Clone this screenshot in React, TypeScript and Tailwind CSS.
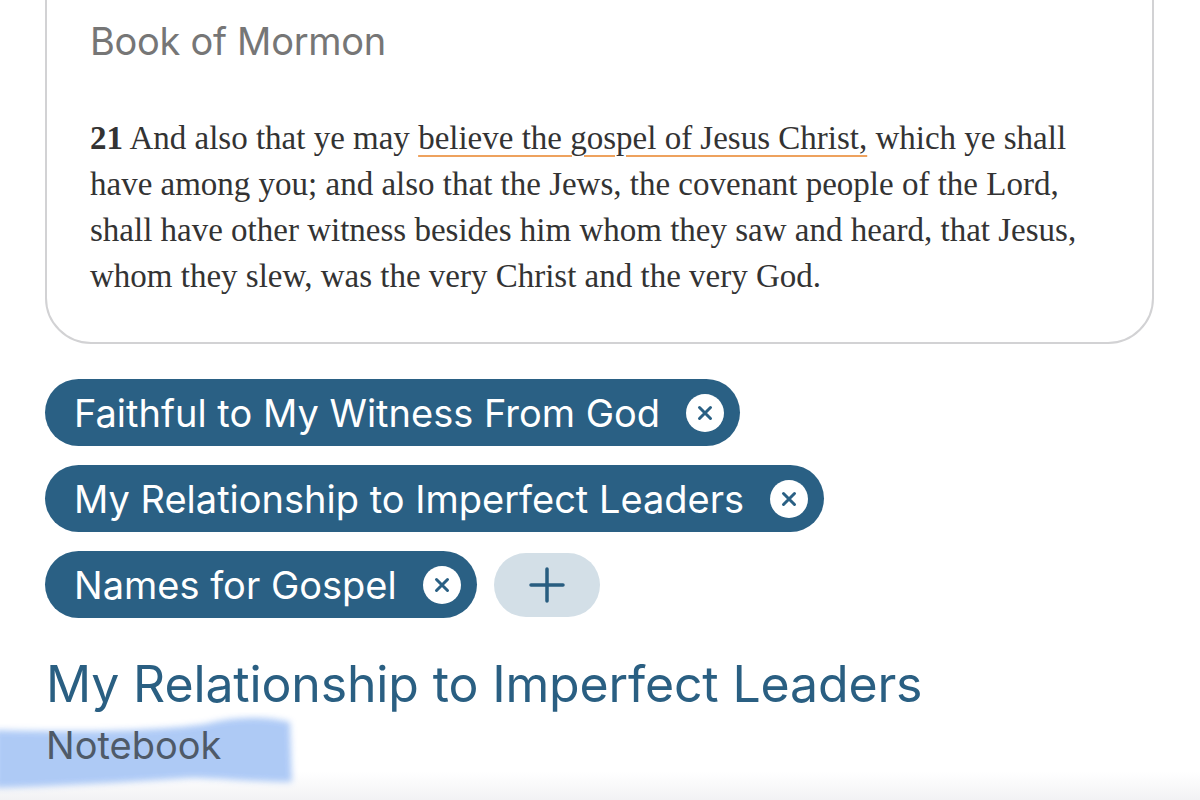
import React from "react";

const sans = { fontFamily: "Inter, 'Liberation Sans', sans-serif" };
const serif = { fontFamily: "'Liberation Serif', 'DejaVu Serif', serif" };

function CloseDot() {
  return (
    <span className="flex h-[38px] w-[38px] shrink-0 items-center justify-center rounded-full bg-white">
      <svg width="16" height="16" viewBox="0 0 16 16">
        <path d="M2.5 2.5 L13.5 13.5 M13.5 2.5 L2.5 13.5" stroke="#2a6084" strokeWidth="3" strokeLinecap="round" />
      </svg>
    </span>
  );
}

function Chip({ label }: { label: string }) {
  return (
    <div className="flex h-[67px] items-center rounded-full bg-[#2a6084] pl-[29px] pr-[16px]">
      <span className="text-[38px] leading-none text-white" style={sans}>
        {label}
      </span>
      <span className="ml-[26px]">
        <CloseDot />
      </span>
    </div>
  );
}

export default function App() {
  return (
    <div className="relative h-[800px] w-[1200px] overflow-hidden bg-white">
      <div className="pointer-events-none absolute bottom-0 left-0 h-[28px] w-full bg-gradient-to-b from-white to-[#f2f2f4]" />

      <div className="relative ml-[45px] mr-[46px] -mt-[60px] rounded-[46px] border-2 border-[#d2d2d4] bg-white pl-[43px] pr-[30px] pt-[76px] pb-[43px]">
        <div className="text-[38px] leading-[46px] tracking-[-0.3px] text-[#767676]" style={sans}>
          Book of Mormon
        </div>
        <p className="mt-[51px] text-[33px] leading-[46px] text-[#333]" style={serif}>
          <span className="font-bold">21</span> And also that ye may{" "}
          <span className="underline decoration-[#eea25e] decoration-2 underline-offset-[6px]">
            believe the gospel of Jesus Christ,
          </span>{" "}
          which ye shall
          <br />
          have among you; and also that the Jews, the covenant people of the Lord,
          <br />
          shall have other witness besides him whom they saw and heard, that Jesus,
          <br />
          whom they slew, was the very Christ and the very God.
        </p>
      </div>

      <div className="relative ml-[45px] mt-[35px] flex flex-col items-start gap-[19px]">
        <Chip label="Faithful to My Witness From God" />
        <Chip label="My Relationship to Imperfect Leaders" />
        <div className="flex items-center gap-[17px]">
          <Chip label="Names for Gospel" />
          <div className="flex h-[64px] w-[106px] items-center justify-center rounded-full bg-[#d3dfe7]">
            <svg width="36" height="36" viewBox="0 0 36 36">
              <path d="M18 2 V34 M2 18 H34" stroke="#285d80" strokeWidth="3.5" strokeLinecap="round" />
            </svg>
          </div>
        </div>
      </div>

      <div className="relative ml-[46px] mt-[36px]">
        <svg
          className="pointer-events-none absolute left-[-46px] top-[58px]"
          width="320"
          height="100"
          viewBox="0 0 320 100"
        >
          <defs>
            <filter id="blur" x="-10%" y="-20%" width="120%" height="140%">
              <feGaussianBlur stdDeviation="3" />
            </filter>
          </defs>
          <path
            d="M-5 18 C60 20 150 20 205 12 C235 4 265 4 290 10 L292 70 C250 70 220 66 190 66 C130 70 60 74 -5 76 Z"
            fill="#a6c5f5"
            opacity="0.9"
            filter="url(#blur)"
          />
        </svg>
        <div className="relative text-[50px] leading-[60px] tracking-[-0.15px] text-[#2a5f82]" style={sans}>
          My Relationship to Imperfect Leaders
        </div>
        <div className="relative mt-[8px] text-[38px] leading-[46px] text-[#4f5a68]" style={sans}>
          Notebook
        </div>
      </div>
    </div>
  );
}
